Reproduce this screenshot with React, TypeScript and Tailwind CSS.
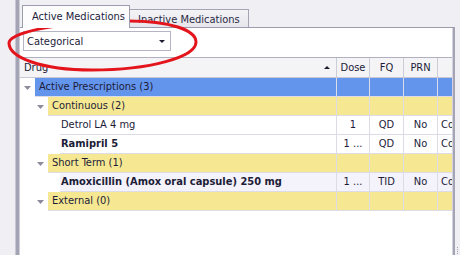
import React from "react";

const FONT = "font-['DejaVu_Sans_Condensed','Liberation_Sans',sans-serif]";

function Tri() {
  return (
    <svg width="7" height="4" viewBox="0 0 7 4" className="block">
      <polygon points="0,0 7,0 3.5,4" fill="#8c8c9c" />
    </svg>
  );
}

type RowProps = {
  level: 0 | 1 | 2;
  bg: string;
  text: string;
  bold?: boolean;
  dose?: string;
  fq?: string;
  prn?: string;
  co?: string;
};

function Row({ level, bg, text, bold, dose, fq, prn, co }: RowProps) {
  const indent = level === 0 ? "w-[15px] pl-[4px]" : level === 1 ? "w-[28px] pl-[17px]" : "w-[40px]";
  const drugW = level === 0 ? "w-[302px] pl-[4px]" : level === 1 ? "w-[289px] pl-[4px]" : "w-[277px] pl-[1px]";
  return (
    <div className="flex h-[19px]">
      <div className={`${indent} shrink-0 bg-white pt-[8px]`}>{level < 2 ? <Tri /> : null}</div>
      <div className={`flex flex-1 border-b border-[#dcdce6] ${bg}`}>
        <div
          className={`${drugW} shrink-0 border-r border-[#dcdce6] leading-[18px] whitespace-nowrap overflow-hidden ${bold ? "font-bold" : ""}`}
        >
          {text}
        </div>
        <div className="w-[33px] shrink-0 border-r border-[#dcdce6] text-center leading-[18px] whitespace-nowrap">{dose}</div>
        <div className="w-[34px] shrink-0 border-r border-[#dcdce6] text-center leading-[18px]">{fq}</div>
        <div className="w-[34px] shrink-0 border-r border-[#dcdce6] text-center leading-[18px]">{prn}</div>
        <div className="w-[14px] shrink-0 pl-[3px] leading-[18px] whitespace-nowrap overflow-hidden">{co}</div>
      </div>
    </div>
  );
}

export default function App() {
  return (
    <div className={`relative w-[460px] h-[255px] overflow-hidden bg-[#f0f0f4] flex text-[11px] text-[#1c1c38] ${FONT}`}>
      <div className="w-[15px] shrink-0" />
      <div className="w-[5px] shrink-0 flex">
        <div className="w-px bg-[#c8c8d2]" />
        <div className="w-[3px] bg-[#a4a4b4]" />
        <div className="w-px bg-[#cfcfd9]" />
      </div>
      <div className="w-[435px] shrink-0 flex flex-col">
        {/* tab strip */}
        <div className="h-[27px] flex items-end pl-[2px]">
          <div className="relative z-10 -mb-px h-[23px] w-[108px] border border-b-0 border-[#9c9cac] bg-[#fdfdfe] pl-[9px] pt-[4px] leading-[13px] whitespace-nowrap">
            Active Medications
          </div>
          <div className="h-[18px] w-[119px] border-t border-r border-[#a4a4b4] bg-gradient-to-b from-[#f4f4f7] to-[#e6e6ec] pl-[8px] pt-[3px] leading-[13px] text-[#2a2a44] whitespace-nowrap">
            Inactive Medications
          </div>
        </div>
        {/* panel */}
        <div className="flex-1 flex border-t border-[#9c9cac]">
          <div className="w-[432px] shrink-0 bg-white flex flex-col">
            <div className="ml-[3px] mt-[3px] h-[20px] w-[148px] border border-[#b4b4c4] bg-white flex items-center justify-between pl-[3px] pr-[5px]">
              <span className="leading-[13px]">Categorical</span>
              <svg width="6" height="3" viewBox="0 0 6 3" className="block">
                <polygon points="0,0 6,0 3,3" fill="#1c1c30" />
              </svg>
            </div>
            {/* header */}
            <div className="mt-[6px] flex h-[21px] border-t border-b border-t-[#b0b0c0] border-b-[#c8c8d4] bg-[#f4f4f7]">
              <div className="w-[317px] shrink-0 border-r border-[#cdcdd8] flex items-center justify-between pl-[4px] pr-[6px]">
                <span className="leading-[13px]">Drug</span>
                <svg width="6" height="3" viewBox="0 0 6 3" className="block">
                  <polygon points="3,0 6,3 0,3" fill="#1c1c30" />
                </svg>
              </div>
              <div className="w-[33px] shrink-0 border-r border-[#cdcdd8] text-center leading-[19px]">Dose</div>
              <div className="w-[34px] shrink-0 border-r border-[#cdcdd8] text-center leading-[19px]">FQ</div>
              <div className="w-[34px] shrink-0 border-r border-[#cdcdd8] text-center leading-[19px]">PRN</div>
              <div className="w-[14px] shrink-0" />
            </div>
            <Row level={0} bg="bg-[#6495ed]" text="Active Prescriptions (3)" />
            <Row level={1} bg="bg-[#f6e892]" text="Continuous (2)" />
            <Row level={2} bg="bg-white" text="Detrol LA 4 mg" dose="1" fq="QD" prn="No" co="Cont" />
            <Row level={2} bg="bg-white" text="Ramipril 5" bold dose="1 ..." fq="QD" prn="No" co="Cont" />
            <Row level={1} bg="bg-[#f6e892]" text="Short Term (1)" />
            <Row level={2} bg="bg-[#f4f2fa]" text="Amoxicillin (Amox oral capsule) 250 mg" bold dose="1 ..." fq="TID" prn="No" co="Cont" />
            <Row level={1} bg="bg-[#f6e892]" text="External (0)" />
          </div>
          <div className="w-[3px] shrink-0 flex">
            <div className="w-px bg-[#d4d4de]" />
            <div className="w-[2px] bg-[#a4a4b4]" />
          </div>
        </div>
      </div>
      <div className="w-[5px] shrink-0 flex flex-col justify-end items-center pb-[1px] gap-[1px]">
        <div className="w-px h-px bg-[#a0a0b0]" />
        <div className="w-px h-px bg-[#a0a0b0]" />
        <div className="w-px h-px bg-[#a0a0b0]" />
        <div className="w-px h-px bg-[#a0a0b0]" />
      </div>
      <svg className="absolute left-0 top-0 pointer-events-none" width="460" height="255" viewBox="0 0 460 255">
        <path
          d="M 9 43 C 9 33, 55 22, 128 21 C 170 21, 196 30, 196 42 C 196 57, 150 70, 92 70 C 40 70, 9 57, 9 43 Z"
          fill="none"
          stroke="#e3141b"
          strokeWidth="3"
        />
      </svg>
    </div>
  );
}
